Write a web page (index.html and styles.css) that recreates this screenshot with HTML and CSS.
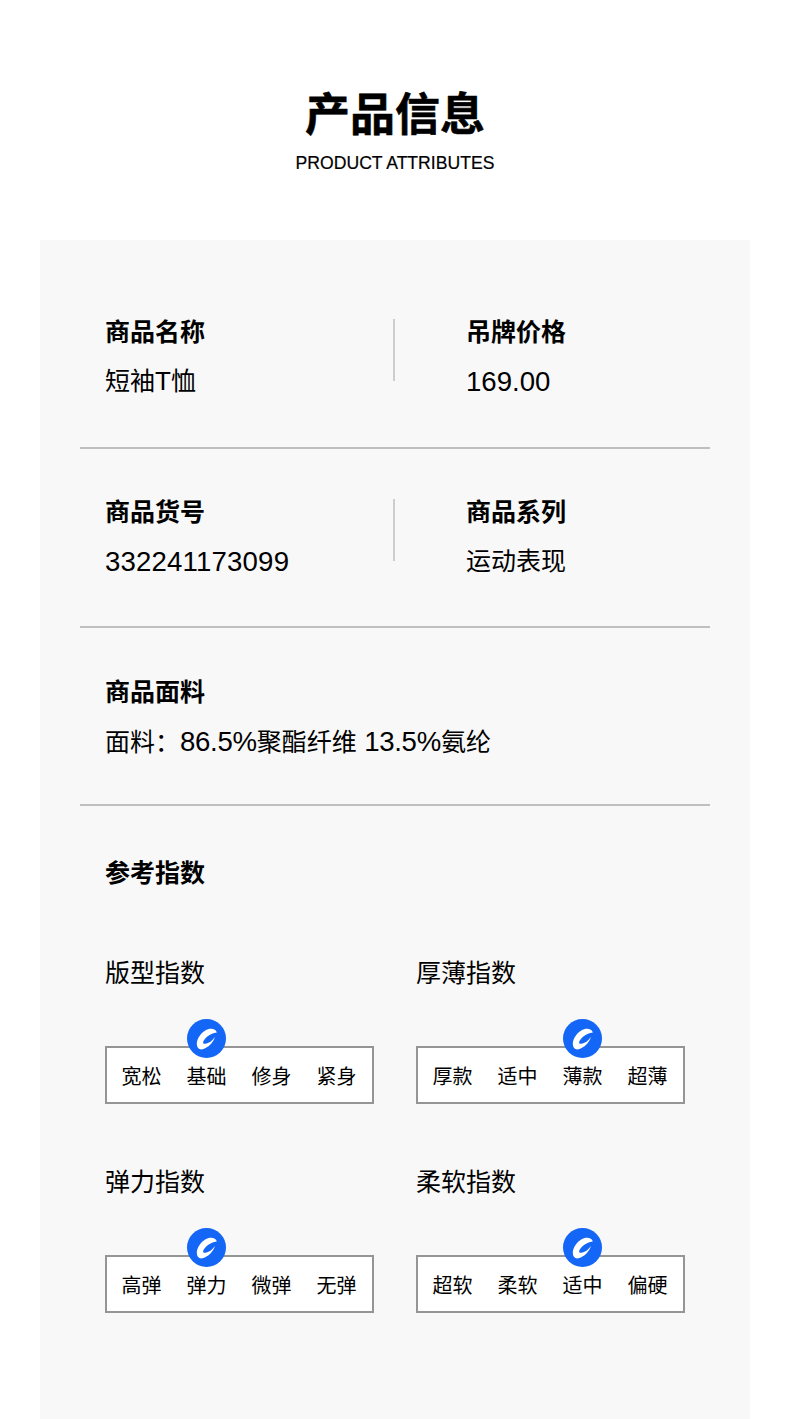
FILE: index.html
```html
<!DOCTYPE html>
<html lang="zh">
<head>
<meta charset="utf-8">
<title>产品信息</title>
<link rel="stylesheet" href="styles.css">
</head>
<body>
<svg class="defs" width="0" height="0" aria-hidden="true">
  <symbol id="logo" viewBox="0 0 39 39">
    <path fill="#fff" d="M29.800 13.500C28.800 9.500 23 8.700 18.200 11.500 13.500 14.300 9.800 20 9.800 25 9.800 29.500 12.800 31.300 16.500 30 21 28.500 26 24 28 18 25.500 21.800 21.700 24.300 18.500 24.800 16.300 25.100 15.500 23.900 16.500 22 18 19.200 21 16.500 24 15.200 26.300 14.200 28.300 13.800 29.800 13.500Z"/>
  </symbol>
</svg>
<main class="page">
  <header class="head">
    <h1 class="head-title">产品信息</h1>
    <p class="head-sub">PRODUCT ATTRIBUTES</p>
  </header>
  <section class="panel">
    <div class="row row-first">
      <div class="cell cell-left">
        <h2 class="label">商品名称</h2>
        <p class="value">短袖<span class="lat-t">T</span>恤</p>
      </div>
      <span class="rule"></span>
      <div class="cell cell-right">
        <h2 class="label">吊牌价格</h2>
        <p class="value"><span class="lat">169.00</span></p>
      </div>
    </div>
    <div class="row">
      <div class="cell cell-left">
        <h2 class="label">商品货号</h2>
        <p class="value"><span class="lat lat-wide">332241173099</span></p>
      </div>
      <span class="rule"></span>
      <div class="cell cell-right">
        <h2 class="label">商品系列</h2>
        <p class="value">运动表现</p>
      </div>
    </div>
    <div class="row row-third">
      <div class="cell">
        <h2 class="label">商品面料</h2>
        <p class="value">面料：<span class="lat lat-tight">86.5%</span>聚酯纤维<span class="lat lat-tight"> 13.5%</span>氨纶</p>
      </div>
    </div>
    <div class="index">
      <h2 class="label index-label">参考指数</h2>
      <div class="index-grid">
        <div class="meter">
          <h3 class="meter-name">版型指数</h3>
          <div class="scale">
            <span class="opt">宽松</span>
            <span class="opt"><svg class="mark"><use href="#logo"/></svg>基础</span>
            <span class="opt">修身</span>
            <span class="opt">紧身</span>
          </div>
        </div>
        <div class="meter">
          <h3 class="meter-name">厚薄指数</h3>
          <div class="scale">
            <span class="opt">厚款</span>
            <span class="opt">适中</span>
            <span class="opt"><svg class="mark"><use href="#logo"/></svg>薄款</span>
            <span class="opt">超薄</span>
          </div>
        </div>
        <div class="meter">
          <h3 class="meter-name">弹力指数</h3>
          <div class="scale">
            <span class="opt">高弹</span>
            <span class="opt"><svg class="mark"><use href="#logo"/></svg>弹力</span>
            <span class="opt">微弹</span>
            <span class="opt">无弹</span>
          </div>
        </div>
        <div class="meter">
          <h3 class="meter-name">柔软指数</h3>
          <div class="scale">
            <span class="opt">超软</span>
            <span class="opt">柔软</span>
            <span class="opt"><svg class="mark"><use href="#logo"/></svg>适中</span>
            <span class="opt">偏硬</span>
          </div>
        </div>
      </div>
    </div>
  </section>
</main>
</body>
</html>
```

FILE: styles.css
```css
* { box-sizing: border-box; margin: 0; padding: 0; }
html, body { height: 100%; }
body {
  background: #fff;
  color: #000;
  font-family: "Liberation Sans", "Noto Sans CJK SC", sans-serif;
  overflow: hidden;
}
.defs { position: absolute; }
.page { width: 790px; }
.head { height: 240px; padding-top: 86px; text-align: center; }
.head-title { font-size: 45px; line-height: 60px; font-weight: 700; -webkit-text-stroke: 0.6px #000; }
.head-sub { font-size: 17.6px; line-height: 22px; margin-top: 6px; font-weight: 400; -webkit-text-stroke: 0.2px #000; }
.panel { margin: 0 40px; padding: 0 40px; height: 1179px; background: #f8f8f8; }
.row {
  display: flex;
  align-items: flex-start;
  height: 179px;
  padding-top: 50px;
  border-bottom: 2px solid #bfbfbf;
}
.row-first { height: 209px; padding-top: 79px; }
.row-third { height: 178px; padding-top: 51px; }
.cell { padding-left: 25px; }
.cell-left { width: 313px; flex: none; }
.cell-right { padding-left: 71px; }
.rule { flex: none; width: 2px; height: 62px; background: #cdcdcd; }
.label { font-size: 25px; line-height: 26px; font-weight: 700; }
.value { font-size: 25px; line-height: 26px; margin-top: 23px; font-weight: 400; }
.lat { font-size: 27.6px; line-height: 1; white-space: pre; }
.lat-wide { letter-spacing: 0.17px; }
.lat-tight { letter-spacing: -0.3px; }
.lat-t { font-size: 26px; line-height: 1; }
.index { padding: 53px 25px 0; }
.index-label { line-height: 28px; }
.index-grid {
  display: grid;
  grid-template-columns: 269px 269px;
  column-gap: 42px;
  row-gap: 64px;
  margin-top: 72px;
}
.meter-name { font-size: 25px; line-height: 28px; font-weight: 400; }
.scale {
  display: flex;
  height: 58px;
  margin-top: 59px;
  padding: 0 3px 0 2px;
  background: #fff;
  border: 2px solid #959595;
}
.opt {
  position: relative;
  flex: 1;
  font-size: 20px;
  line-height: 58px;
  text-align: center;
  white-space: nowrap;
}
.mark {
  position: absolute;
  left: 50%;
  top: -29px;
  width: 39px;
  height: 39px;
  margin-left: -19.5px;
  background: #1467f6;
  border-radius: 50%;
}
```
